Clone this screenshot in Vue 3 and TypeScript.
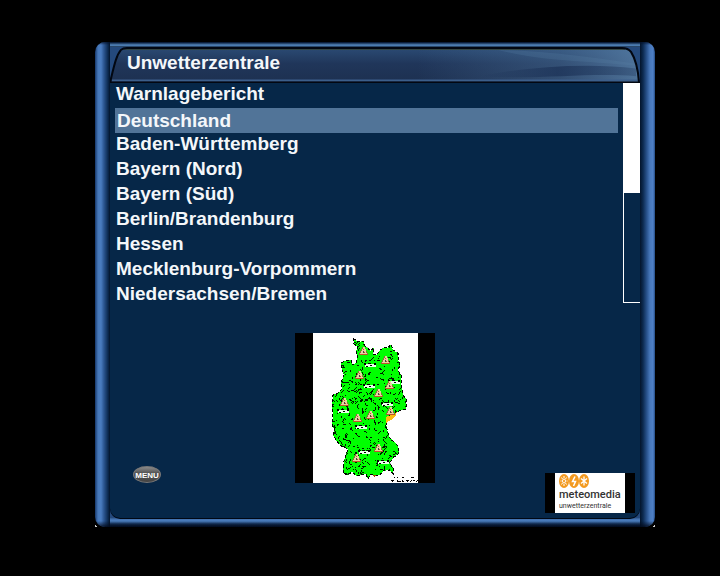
<script setup lang="ts">
import { computed, ref } from 'vue'

interface Point { x: number; y: number }

const regions: string[] = [
  'Warnlagebericht',
  'Deutschland',
  'Baden-Württemberg',
  'Bayern (Nord)',
  'Bayern (Süd)',
  'Berlin/Brandenburg',
  'Hessen',
  'Mecklenburg-Vorpommern',
  'Niedersachsen/Bremen',
]
const selected = ref(1)

const outline: [number, number][] = [
  [58, 5], [63, 9], [68, 8], [70, 13], [73, 15], [75, 18], [79, 15], [78, 21], [82, 22], [85, 17],
  [90, 14], [93, 15], [96, 11], [98, 17], [103, 20], [103, 26], [105, 32], [103, 37], [106, 42], [106, 48], [107, 57],
  [108, 62], [111, 66], [111, 76], [106, 77], [100, 80], [97, 86], [91, 89], [92, 96], [94, 104], [98, 108],
  [103, 113], [104, 120], [98, 125], [95, 130], [98, 135], [98, 141], [94, 137], [88, 138], [85, 142], [80, 143],
  [76, 141], [73, 146], [71, 141], [67, 141], [62, 143], [57, 139], [53, 142], [48, 140], [49, 128],
  [53, 116], [46, 113], [41, 107], [38, 102], [40, 97], [37, 92], [38, 83], [37, 72], [38, 62],
  [43, 60], [47, 56], [46, 50], [49, 42], [47, 36], [46, 30], [50, 28], [56, 27], [57, 32], [61, 30],
  [63, 23], [61, 18], [63, 14], [59, 11],
]
const outlinePoints = outline.map(p => p.join(',')).join(' ')

// Deterministic generator, so the district borders are the same on each load
function makeRandom(seed: number): () => number {
  let s = seed
  return () => {
    s = (s * 16807) % 2147483647
    return s / 2147483647
  }
}

const districtPath = computed(() => {
  const random = makeRandom(4711)
  let d = ''
  for (let i = 0; i < 560; i++) {
    let x = 36 + Math.floor(random() * 76)
    let y = 6 + Math.floor(random() * 138)
    const steps = 1 + Math.floor(random() * 4)
    const dir = random() > 0.5 ? 1 : -1
    for (let k = 0; k < steps; k++) {
      d += `M${x} ${y}h1v1h-1z`
      if (random() > 0.4) x += dir
      if (random() > 0.4) y += 1
    }
  }
  return d
})

const captionPath = computed(() => {
  const random = makeRandom(99)
  let d = ''
  for (let x = 95; x < 123; x++) {
    if (random() > 0.5) d += `M${x} 147h1v1h-1z`
    if (random() > 0.6) d += `M${x} 148h1v1h-1z`
    if (x > 98 && random() > 0.6) d += `M${x} 144h1v1h-1z`
  }
  return d
})

const warnings: Point[] = [
  { x: 68, y: 18 }, { x: 90, y: 27 }, { x: 64, y: 42 }, { x: 94, y: 52 },
  { x: 83, y: 60 }, { x: 49, y: 69 }, { x: 62, y: 85 }, { x: 75, y: 82 },
  { x: 95, y: 78 }, { x: 83, y: 115 }, { x: 61, y: 125 },
]
const cities: Point[] = [
  { x: 75, y: 31 }, { x: 74, y: 52 }, { x: 99, y: 48 }, { x: 92, y: 70 },
  { x: 48, y: 77 }, { x: 66, y: 93 }, { x: 69, y: 118 }, { x: 88, y: 128 },
]
</script>

<template>
  <main class="frame">
    <header class="title">
      <svg class="title-shape" viewBox="0 0 532 37" preserveAspectRatio="none" aria-hidden="true">
        <defs>
          <linearGradient id="bar" x1="0" y1="0" x2="0" y2="1">
            <stop offset="0" stop-color="#2b4b74" />
            <stop offset=".45" stop-color="#20365a" />
            <stop offset="1" stop-color="#1d3050" />
          </linearGradient>
          <linearGradient id="sheen" x1="0" y1="0" x2="1" y2="0">
            <stop offset=".58" stop-color="#50779f" stop-opacity="0" />
            <stop offset=".85" stop-color="#50779f" stop-opacity=".4" />
            <stop offset="1" stop-color="#5a82aa" stop-opacity=".8" />
          </linearGradient>
          <linearGradient id="shade" x1="0" y1="0" x2="1" y2="0">
            <stop offset="0" stop-color="#1b3156" stop-opacity="0" />
            <stop offset=".5" stop-color="#1b3156" stop-opacity=".7" />
            <stop offset="1" stop-color="#1b3156" stop-opacity=".3" />
          </linearGradient>
        </defs>
        <path d="M0 37C4 20 6 9 11 3Q13 1 17 1H514Q520 1 523 5C528 13 530 22 531 37Z" fill="url(#bar)" />
        <path d="M0 37C4 20 6 9 11 3Q13 1 17 1H514Q520 1 523 5C528 13 530 22 531 37Z" fill="url(#sheen)" />
        <path d="M370 30C420 20 480 16 528 22V30C480 26 430 34 370 30Z" fill="url(#shade)" />
        <path d="M390 3C430 4 470 8 526 17V19C470 14 430 14 390 3Z" fill="#5b82aa" opacity=".22" />
        <path d="M14 2.500H517" stroke="#34443f" fill="none" />
        <path d="M2 34.500H530" stroke="#3c5f8b" stroke-width="2" fill="none" />
        <path d="M0 36.500C4 20 6 9 11 3Q13 1 17 1H514Q520 1 523 5C528 13 530 22 531 36.500Z" fill="none" stroke="#020711" stroke-width="2" />
      </svg>
      <h1>Unwetterzentrale</h1>
    </header>

    <section class="panel">
      <div class="browser">
        <ul class="regions">
          <li v-for="(region, i) in regions" :key="region">
            <button
              type="button"
              class="region"
              :class="{ active: i === selected }"
              @click="selected = i"
            >{{ region }}</button>
          </li>
        </ul>
        <div class="track"><div class="thumb"></div></div>
      </div>

      <footer class="footer">
        <button type="button" class="menu">MENU</button>

        <svg class="map" viewBox="0 0 140 150" role="img" aria-label="Deutschland">
          <defs>
            <clipPath id="land"><polygon :points="outlinePoints" /></clipPath>
          </defs>
          <rect width="140" height="150" fill="#000" />
          <rect x="18" width="105" height="150" fill="#fff" />
          <g shape-rendering="crispEdges">
            <polygon :points="outlinePoints" fill="#0f0" stroke="#000" stroke-dasharray="3 2" />
            <path :d="districtPath" fill="#001800" clip-path="url(#land)" />
            <path d="M91 84l5-2 6-3-2 5-4 3-5 3z" fill="#fb1" />
            <path d="M77 142h4l-2 2z" fill="#a40" />
            <g v-for="(c, i) in cities" :key="'c' + i" :transform="`translate(${c.x} ${c.y})`">
              <path d="M-5 0H6V3H-5z" fill="#e8ffe8" />
              <path d="M-6-1h2v2h-2zM-2-1h3v1h-3zM0 1h2v1h-2zM4-1h2v2h-2zM-4 2h2v1h-2z" fill="#000" />
            </g>
            <g v-for="(w, i) in warnings" :key="'w' + i" :transform="`translate(${w.x} ${w.y})`">
              <path d="M-1-4H2V-2H3V0H4V2H5V4H-4V2H-3V0H-2V-2H-1z" fill="#e6d3a0" />
              <path d="M-1-4h1v2h-1zM-2-2h1v2h-1zM-3 0h1v2h-1zM3 0h1v2h-1zM-4 2h1v2h-1zM4 2h1v2h-1z" fill="#8a6c38" />
              <path d="M-3 3h7v1h-7zM0-2h1v1h-1zM1 1h1v1h-1z" fill="#c4502c" />
              <path d="M0 0h1v2h-1z" fill="#444" />
            </g>
            <path :d="captionPath" fill="#000" />
          </g>
        </svg>

        <div class="brand">
          <svg class="brand-icons" viewBox="0 0 30 14" aria-hidden="true">
            <g fill="#f39a20">
              <ellipse cx="5" cy="7" rx="5" ry="7" />
              <ellipse cx="15" cy="7" rx="5" ry="7" />
              <ellipse cx="25" cy="7" rx="5" ry="7" />
            </g>
            <g fill="none" stroke="#fff">
              <ellipse cx="5" cy="7" rx="1.500" ry="2" />
              <path d="M5 2v2M5 10v2M1.500 7h1M7.500 7h1M2.500 3.500l1 1.500M7.500 3.500l-1 1.500M2.500 10.500l1-1.500M7.500 10.500l-1-1.500" />
              <path d="M16 2.500L13.500 7.500H16.500L14.500 12" stroke-width="1.500" />
              <path d="M25 2.500v9M22 4.500l6 5M28 4.500l-6 5" stroke-width="1.300" />
            </g>
          </svg>
          <strong>meteomedia</strong>
          <span>unwetterzentrale</span>
        </div>
      </footer>
    </section>
  </main>
</template>

<style>
body {
  background: #000;
}
</style>

<style scoped>
.frame {
  position: relative;
  margin: 42px 65px 0 95px;
  padding: 5px 15px 9px;
  border-radius: 10px;
  font-family: "Liberation Sans", Arial, sans-serif;
  color: #f4f7fa;
  background:
    linear-gradient(#30588e, #4a7cbc 2px, #4474b2 4px, #1c4070 6px, #071a36 9px) bottom / calc(100% - 30px) 9px no-repeat,
    linear-gradient(#081c3c, #4c7cb0 2px, #4c7cb0 4px, #061223 5px) top / calc(100% - 30px) 5px no-repeat,
    linear-gradient(90deg, #17386b, #4677b8 3px, #4a7cc0 6px, #2b5590 9px, #0c2a50 13px, #03142b 15px) left / 15px 100% no-repeat,
    linear-gradient(270deg, #234a82, #4e80c6 2px, #4878ba 5px, #2b5590 8px, #0c2a50 12px, #03142b 15px) right / 15px 100% no-repeat,
    #24497c;
}

.frame::before {
  content: "";
  position: absolute;
  inset: 0;
  border-radius: inherit;
  background:
    linear-gradient(rgb(3 16 40 / 75%), rgb(3 16 40 / 0%) 3px),
    linear-gradient(0deg, rgb(2 10 28 / 90%), rgb(2 10 28 / 0%) 6px);
  pointer-events: none;
}

.frame::after {
  content: "";
  position: absolute;
  inset: auto 0 0;
  height: 3px;
  background:
    linear-gradient(45deg, #ccc 2px, transparent 2px) left / 3px 3px no-repeat,
    linear-gradient(315deg, #ccc 2px, transparent 2px) right / 3px 3px no-repeat;
  pointer-events: none;
}

.title {
  position: relative;
  height: 36px;
}

.title-shape {
  position: absolute;
  left: 0;
  top: 0;
  width: 100%;
  height: 100%;
}

h1 {
  position: relative;
  margin: 0;
  padding: 5px 17px;
  font-size: 19px;
  line-height: 22px;
}

.panel {
  position: relative;
  padding-bottom: 5px;
  background: #062748;
  border-radius: 0 0 10px 10px;
  box-shadow: 0 1px 0 #010814;
}

.browser {
  display: flex;
  align-items: flex-start;
}

.regions {
  flex: 1;
  margin: 0 5px;
  padding: 0;
  list-style: none;
}

.region {
  display: block;
  width: 100%;
  height: 25px;
  padding: 0 1px 4px;
  border: 0;
  background: transparent;
  color: inherit;
  font: bold 19px/21px "Liberation Sans", Arial, sans-serif;
  text-align: left;
}

.region.active {
  padding: 2px 2px;
  background: #517498;
}

.track {
  width: 17px;
  height: 220px;
  box-sizing: border-box;
  border: solid #fff;
  border-width: 0 0 1px 1px;
}

.thumb {
  height: 50%;
  background: #fff;
}

.footer {
  display: grid;
  grid-template-columns: 37fr auto 40fr;
  align-items: end;
  padding: 25px 5px 0 0;
}

.menu {
  width: 28px;
  height: 17px;
  margin: 0 0 30px 23px;
  padding: 0;
  border: 1px solid #777;
  border-radius: 50%;
  background: linear-gradient(#8b8b8b, #555 40%, #444);
  color: #fff;
  font: bold 8px/17px "Liberation Sans", Arial, sans-serif;
  display: flex;
  justify-content: center;
}

.map {
  display: block;
  width: 140px;
  height: 150px;
  margin-bottom: 30px;
}

.brand {
  justify-self: end;
  display: flex;
  flex-direction: column;
  box-sizing: border-box;
  width: 90px;
  height: 40px;
  padding: 1px 0 0 4px;
  border: solid #000;
  border-width: 0 10px;
  background: #fff;
  color: #333;
  font-family: Roboto, "Liberation Sans", Arial, sans-serif;
}

.brand-icons {
  width: 30px;
  height: 14px;
}

.brand strong {
  font-size: 11px;
  font-weight: 500;
  line-height: 14px;
}

.brand span {
  font-size: 7px;
  line-height: 9px;
}
</style>
